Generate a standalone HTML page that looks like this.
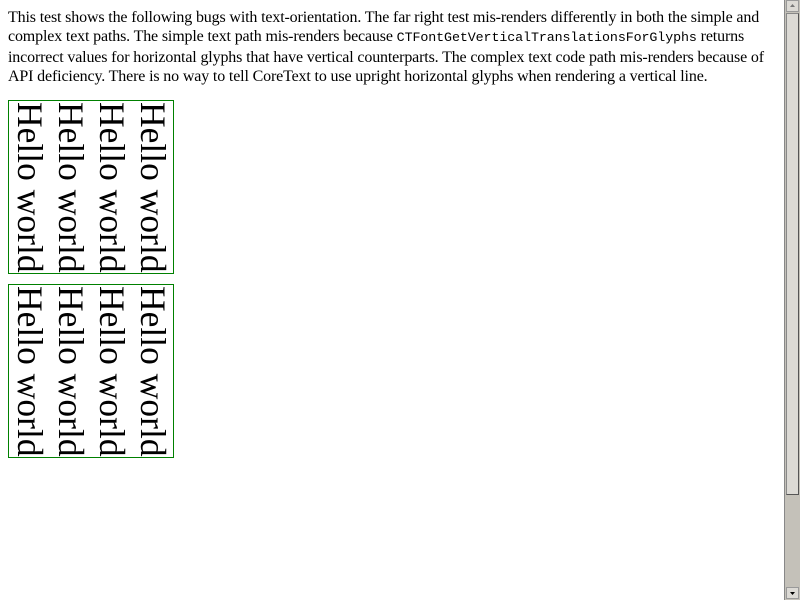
<!DOCTYPE html>
<html><head><style>
html,body{margin:0;padding:0;background:#fff;overflow:hidden}
body{width:784px;height:600px;position:relative;font-family:"Liberation Serif",serif;font-size:16px;color:#000}
p{margin:0;position:absolute;left:8px;top:8px;width:770px;line-height:19px;letter-spacing:-0.15px}
code{font-family:"Liberation Mono",monospace;font-size:13.33px;letter-spacing:-0.1px}
.box{position:absolute;left:8px;width:164px;height:172px;border:1px solid green;writing-mode:vertical-rl;font-size:35.5px;line-height:41px;white-space:nowrap;overflow:hidden}
.box div{padding-top:1px}
.sb{position:absolute;left:784px;top:0;width:16px;height:600px;background:#c4c1b9;border-left:1px solid #888;box-sizing:border-box}
.btn{position:absolute;left:1px;width:13px;height:12px;background:#dcdad5;border:1px solid #999;box-sizing:border-box}
.thumb{position:absolute;left:1px;top:13px;width:13px;height:482px;background:#dcdad5;border:1px solid #888;border-right-color:#555;border-bottom-color:#555;box-sizing:border-box}
</style></head><body>
<p>This test shows the following bugs with text-orientation. The far right test mis-renders differently in both the simple and complex text paths. The simple text path mis-renders because <code>CTFontGetVerticalTranslationsForGlyphs</code> returns incorrect values for horizontal glyphs that have vertical counterparts. The complex text code path mis-renders because of API deficiency. There is no way to tell CoreText to use upright horizontal glyphs when rendering a vertical line.</p>
<div class="box" style="top:100px"><div>Hello world<br>Hello world<br>Hello world<br>Hello world</div></div>
<div class="box" style="top:284px"><div>Hello world<br>Hello world<br>Hello world<br>Hello world</div></div>
<div class="sb">
<div class="btn" style="top:0"><svg width="11" height="10" style="position:absolute;left:0;top:0"><path d="M3 6h5L5.5 3z" fill="#777"/></svg></div>
<div class="thumb"></div>
<div class="btn" style="top:587px"><svg width="11" height="10" style="position:absolute;left:0;top:0"><path d="M3 4h5L5.5 7z" fill="#000"/></svg></div>
</div>
</body></html>
